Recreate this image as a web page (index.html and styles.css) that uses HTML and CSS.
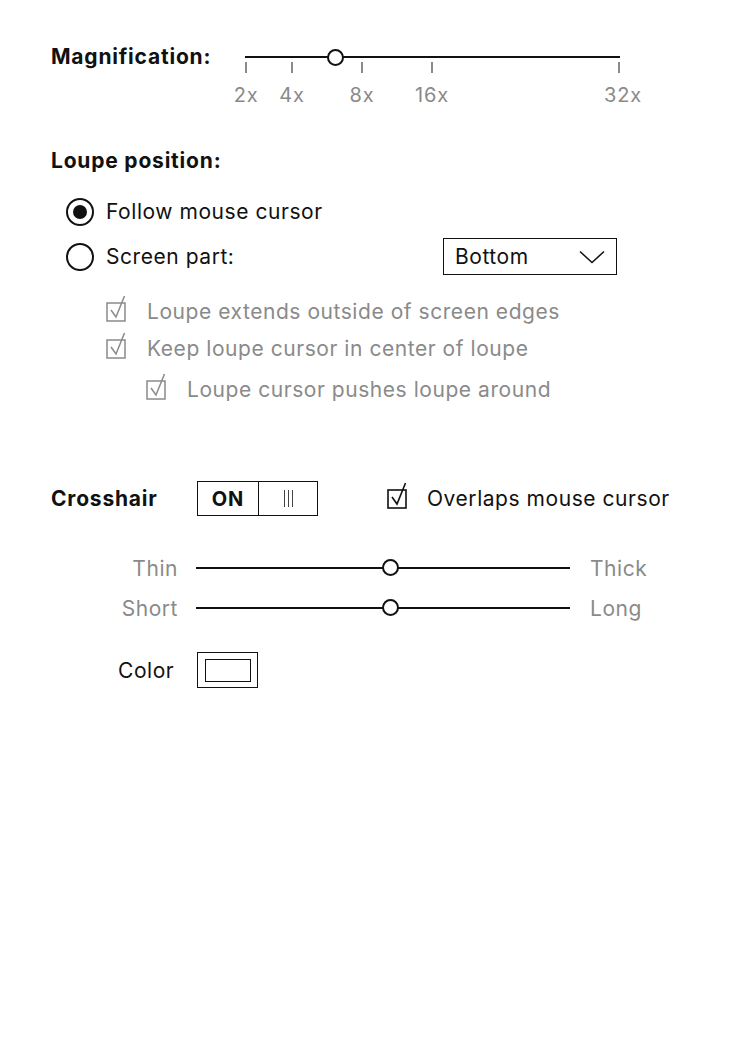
FILE: index.html
```html
<!DOCTYPE html>
<html>
<head>
<meta charset="utf-8">
<link rel="stylesheet" href="styles.css">
</head>
<body>
<div class="page">
  <div class="mag-row">
    <div class="mag-label bold">Magnification:</div>
    <div class="mag-slider">
      <div class="track"></div>
      <div class="knob" style="left:90px"></div>
      <div class="tick" style="left:1px"></div>
      <div class="tick" style="left:47px"></div>
      <div class="tick" style="left:117px"></div>
      <div class="tick" style="left:187px"></div>
      <div class="tick" style="left:374px"></div>
      <div class="tlabel" style="left:1px">2x</div>
      <div class="tlabel" style="left:47px">4x</div>
      <div class="tlabel" style="left:117px">8x</div>
      <div class="tlabel" style="left:187px">16x</div>
      <div class="tlabel" style="left:378px">32x</div>
    </div>
  </div>

  <div class="heading bold">Loupe position:</div>

  <div class="radio-row first">
    <span class="radio checked"></span>
    <span class="radio-text">Follow mouse cursor</span>
  </div>
  <div class="radio-row second">
    <span class="radio"></span>
    <span class="radio-text wide">Screen part:</span>
    <div class="dropdown">
      <span>Bottom</span>
      <svg class="chev" width="26" height="14" viewBox="0 0 26 14"><polyline points="1,1.5 13,12.5 25,1.5" fill="none" stroke="#111" stroke-width="1.5"/></svg>
    </div>
  </div>

  <div class="checks">
    <div class="check-row gray">
      <svg class="cb" width="22" height="34" viewBox="0 0 22 34"><rect x="1" y="8" width="18" height="18" fill="none" stroke="currentColor" stroke-width="1.5"/><path d="M5 15 L10 22 L18.5 1" fill="none" stroke="currentColor" stroke-width="1.5"/></svg>
      <span>Loupe extends outside of screen edges</span>
    </div>
    <div class="check-row gray r2">
      <svg class="cb" width="22" height="34" viewBox="0 0 22 34"><rect x="1" y="8" width="18" height="18" fill="none" stroke="currentColor" stroke-width="1.5"/><path d="M5 15 L10 22 L18.5 1" fill="none" stroke="currentColor" stroke-width="1.5"/></svg>
      <span>Keep loupe cursor in center of loupe</span>
    </div>
    <div class="check-row gray r3">
      <svg class="cb" width="22" height="34" viewBox="0 0 22 34"><rect x="1" y="8" width="18" height="18" fill="none" stroke="currentColor" stroke-width="1.5"/><path d="M5 15 L10 22 L18.5 1" fill="none" stroke="currentColor" stroke-width="1.5"/></svg>
      <span>Loupe cursor pushes loupe around</span>
    </div>
  </div>

  <div class="cross-row">
    <div class="cross-label bold">Crosshair</div>
    <div class="toggle">
      <div class="tog-on bold">ON</div>
      <div class="tog-off"><i></i><i></i><i></i></div>
    </div>
    <div class="check-row dark">
      <svg class="cb" width="22" height="34" viewBox="0 0 22 34"><rect x="1" y="8" width="18" height="18" fill="none" stroke="currentColor" stroke-width="1.6"/><path d="M5 15 L10 22 L18.5 1" fill="none" stroke="currentColor" stroke-width="1.6"/></svg>
      <span>Overlaps mouse cursor</span>
    </div>
  </div>

  <div class="range-row first">
    <div class="range-left">Thin</div>
    <div class="range-track"><div class="track"></div><div class="knob" style="left:194px"></div></div>
    <div class="range-right">Thick</div>
  </div>
  <div class="range-row second">
    <div class="range-left">Short</div>
    <div class="range-track"><div class="track"></div><div class="knob" style="left:194px"></div></div>
    <div class="range-right">Long</div>
  </div>

  <div class="color-row">
    <div class="color-label">Color</div>
    <div class="color-box"><div class="color-inner"></div></div>
  </div>
</div>
</body>
</html>
```

FILE: styles.css
```css
* { box-sizing: border-box; }
body {
  margin: 0;
  background: #fff;
  color: #111;
  font-family: "Inter", "Liberation Sans", sans-serif;
  font-size: 21px;
  letter-spacing: 0.55px;
}
.bold { font-weight: 700; letter-spacing: 0.8px; }
.page { padding: 45px 0 0 51px; }

.mag-row { display: flex; align-items: flex-start; }
.mag-label { width: 194px; line-height: 24px; font-size: 21px; }
.mag-slider { position: relative; width: 375px; height: 60px; }
.track {
  position: absolute; left: 0; right: 0; top: 11px;
  height: 2px; background: #111;
}
.knob {
  position: absolute; top: 4px;
  width: 17px; height: 17px; margin-left: -8.5px;
  border: 2px solid #111; border-radius: 50%; background: #fff;
}
.tick {
  position: absolute; top: 17px; width: 2px; height: 11px;
  margin-left: -1px; background: #8a8a8a;
}
.tlabel {
  position: absolute; top: 38px; width: 60px; margin-left: -30px;
  text-align: center; color: #8a8a8a; font-size: 20px; line-height: 24px;
  letter-spacing: 0.8px;
}

.heading { margin-top: 44px; line-height: 24px; font-size: 21px; }

.radio-row { display: flex; align-items: center; padding-left: 15px; }
.radio-row.first { margin-top: 25px; height: 28px; }
.radio-row.second { margin-top: 12px; height: 37px; }
.radio {
  width: 28px; height: 28px; border: 2px solid #111; border-radius: 50%;
  display: flex; align-items: center; justify-content: center; flex: none;
}
.radio.checked::after {
  content: ""; width: 14px; height: 14px; border-radius: 50%; background: #111;
}
.radio-text { margin-left: 12px; line-height: 24px; }
.radio-text.wide { width: 337px; }
.dropdown {
  width: 174px; height: 37px; border: 1.5px solid #111;
  display: flex; align-items: center; justify-content: space-between;
  padding: 0 11px 0 11px;
}

.checks { margin-top: 25px; }
.check-row { display: flex; align-items: center; height: 24px; }
.check-row.gray { color: #8a8a8a; margin-left: 55px; }
.check-row.r2 { margin-top: 13px; }
.check-row.r3 { margin-top: 17px; margin-left: 95px; }
.cb { flex: none; }
.check-row span { margin-left: 19px; line-height: 24px; }

.cross-row { display: flex; align-items: center; margin-top: 79px; height: 35px; }
.cross-label { width: 146px; font-size: 21px; }
.toggle { display: flex; width: 121px; height: 35px; border: 1.5px solid #111; }
.tog-on {
  width: 61px; border-right: 1.5px solid #111;
  display: flex; align-items: center; justify-content: center; font-size: 20px;
}
.tog-off { flex: 1; display: flex; align-items: center; justify-content: center; gap: 3px; }
.tog-off i { display: block; width: 1px; height: 17px; background: #444; }
.check-row.dark { color: #111; margin-left: 69px; }
.check-row.dark span { margin-left: 18px; }

.range-row { display: flex; align-items: center; height: 24px; color: #8a8a8a; }
.range-row.first { margin-top: 40px; }
.range-row.second { margin-top: 16px; }
.range-left { width: 127px; text-align: right; }
.range-track { position: relative; width: 374px; height: 24px; margin-left: 18px; }
.range-track .track { top: 11px; }
.range-track .knob { top: 3px; }
.range-right { margin-left: 20px; }

.color-row { display: flex; align-items: center; margin-top: 32px; height: 36px; }
.color-label { width: 146px; padding-left: 67px; }
.color-box {
  width: 61px; height: 36px; border: 1.5px solid #111;
  display: flex; align-items: center; justify-content: center;
}
.color-inner { width: 46px; height: 23px; border: 1.5px solid #111; }
```
